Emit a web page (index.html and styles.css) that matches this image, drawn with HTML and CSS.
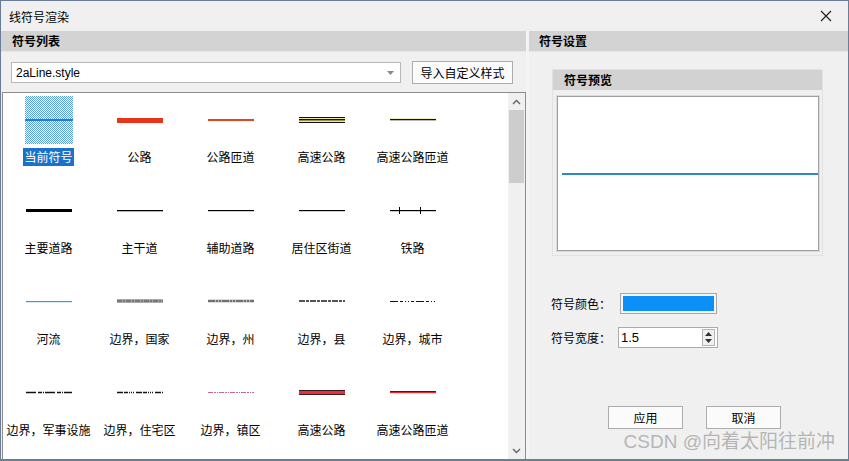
FILE: index.html
```html
<!DOCTYPE html>
<html lang="zh">
<head>
  <meta charset="UTF-8" />
  <title>线符号渲染</title>
  <link rel="stylesheet" href="styles.css">
</head>
<body>

<div class="window">
  <!-- 标题栏 -->
  <div class="titlebar">
    <span class="title">线符号渲染</span>
    <svg class="close" width="12" height="12" viewBox="0 0 12 12">
      <path d="M1 1 L11 11 M11 1 L1 11" stroke="#222" stroke-width="1.2" fill="none" />
    </svg>
  </div>

  <div class="main">
    <!-- 符号列表 -->
    <div class="left">
      <div class="pane-head">符号列表</div>
      <div class="toolbar">
        <div class="combo">
          <span>2aLine.style</span>
          <svg class="combo-arrow" width="7" height="4" viewBox="0 0 7 4"><path d="M0 0 L7 0 L3.5 4 Z" fill="#888" /></svg>
        </div>
        <button class="btn import">导入自定义样式</button>
      </div>

      <div class="listbox">
        <div class="grid">
          <div class="item selected">
            <div class="icon checker">
              <svg width="48" height="48"><rect x="0" y="23" width="48" height="2" fill="#1f7fd6" /></svg>
            </div>
            <span class="label">当前符号</span>
          </div>
          <div class="item">
            <div class="icon"><svg width="48" height="48"><rect x="1" y="22" width="46" height="5" fill="#e8341c" /></svg></div>
            <span class="label">公路</span>
          </div>
          <div class="item">
            <div class="icon"><svg width="48" height="48"><rect x="1" y="23" width="46" height="2" fill="#e0461e" /></svg></div>
            <span class="label">公路匝道</span>
          </div>
          <div class="item">
            <div class="icon"><svg width="48" height="48">
              <rect x="1" y="21" width="46" height="6" fill="#f2e98a" />
              <rect x="1" y="21" width="46" height="1" fill="#111" />
              <rect x="1" y="23" width="46" height="1.4" fill="#111" />
              <rect x="1" y="26" width="46" height="1" fill="#111" />
            </svg></div>
            <span class="label">高速公路</span>
          </div>
          <div class="item">
            <div class="icon"><svg width="48" height="48">
              <rect x="1" y="22" width="46" height="1" fill="#f4f0c0" />
              <rect x="1" y="23" width="46" height="1.3" fill="#111" />
            </svg></div>
            <span class="label">高速公路匝道</span>
          </div>

          <div class="item">
            <div class="icon"><svg width="48" height="48"><rect x="1" y="22" width="46" height="3" fill="#000" /></svg></div>
            <span class="label">主要道路</span>
          </div>
          <div class="item">
            <div class="icon"><svg width="48" height="48"><rect x="1" y="23" width="46" height="1.3" fill="#000" /></svg></div>
            <span class="label">主干道</span>
          </div>
          <div class="item">
            <div class="icon"><svg width="48" height="48"><rect x="1" y="23" width="46" height="1.2" fill="#000" /></svg></div>
            <span class="label">辅助道路</span>
          </div>
          <div class="item">
            <div class="icon"><svg width="48" height="48"><rect x="1" y="23" width="46" height="1.2" fill="#000" /></svg></div>
            <span class="label">居住区街道</span>
          </div>
          <div class="item">
            <div class="icon"><svg width="48" height="48">
              <rect x="1" y="23" width="46" height="1.2" fill="#000" />
              <rect x="10" y="20" width="1" height="7" fill="#000" />
              <rect x="31" y="20" width="1" height="7" fill="#000" />
            </svg></div>
            <span class="label">铁路</span>
          </div>

          <div class="item">
            <div class="icon"><svg width="48" height="48"><rect x="1" y="23" width="46" height="1.2" fill="#3d9ad0" /></svg></div>
            <span class="label">河流</span>
          </div>
          <div class="item">
            <div class="icon"><svg width="48" height="48">
              <rect x="1" y="21" width="46" height="4" fill="#aaa" />
              <line x1="1" y1="23" x2="47" y2="23" stroke="#444" stroke-width="1" stroke-dasharray="5 1 2 1" />
            </svg></div>
            <span class="label">边界，国家</span>
          </div>
          <div class="item">
            <div class="icon"><svg width="48" height="48">
              <rect x="1" y="21.5" width="46" height="3" fill="#bbb" />
              <line x1="1" y1="23" x2="47" y2="23" stroke="#222" stroke-width="1" stroke-dasharray="7 1 2 1 2 1" />
            </svg></div>
            <span class="label">边界，州</span>
          </div>
          <div class="item">
            <div class="icon"><svg width="48" height="48">
              <line x1="1" y1="23" x2="47" y2="23" stroke="#555" stroke-width="2" stroke-dasharray="6 1 3 1" />
            </svg></div>
            <span class="label">边界，县</span>
          </div>
          <div class="item">
            <div class="icon"><svg width="48" height="48">
              <line x1="1" y1="23.5" x2="47" y2="23.5" stroke="#111" stroke-width="1" stroke-dasharray="8 2 3 2 1 2 1 2 3 2" />
            </svg></div>
            <span class="label">边界，城市</span>
          </div>

          <div class="item">
            <div class="icon"><svg width="48" height="48">
              <line x1="1" y1="23.5" x2="47" y2="23.5" stroke="#111" stroke-width="1.3" stroke-dasharray="10 2 4 1 1 1" />
            </svg></div>
            <span class="label">边界，军事设施</span>
          </div>
          <div class="item">
            <div class="icon"><svg width="48" height="48">
              <line x1="1" y1="23.5" x2="47" y2="23.5" stroke="#111" stroke-width="1.3" stroke-dasharray="6 1 4 1 1 1 1 1 1 2" />
            </svg></div>
            <span class="label">边界，住宅区</span>
          </div>
          <div class="item">
            <div class="icon"><svg width="48" height="48">
              <line x1="1" y1="23.5" x2="47" y2="23.5" stroke="#c86a8c" stroke-width="1" stroke-dasharray="5 1 2 1 1 1" />
            </svg></div>
            <span class="label">边界，镇区</span>
          </div>
          <div class="item">
            <div class="icon"><svg width="48" height="48">
              <rect x="1" y="21" width="46" height="5" fill="#3a1a1a" />
              <rect x="1" y="22" width="46" height="3" fill="#e8303c" />
            </svg></div>
            <span class="label">高速公路</span>
          </div>
          <div class="item">
            <div class="icon"><svg width="48" height="48">
              <rect x="1" y="22" width="46" height="1" fill="#5a1414" />
              <rect x="1" y="23" width="46" height="1.2" fill="#e02830" />
            </svg></div>
            <span class="label">高速公路匝道</span>
          </div>
        </div>

        <div class="vscroll">
          <div class="sbtn">
            <svg width="9" height="6" viewBox="0 0 9 6"><path d="M1 5 L4.5 1.5 L8 5" stroke="#606060" stroke-width="1.3" fill="none" /></svg>
          </div>
          <div class="track"><div class="thumb"></div></div>
          <div class="sbtn">
            <svg width="9" height="6" viewBox="0 0 9 6"><path d="M1 1 L4.5 4.5 L8 1" stroke="#606060" stroke-width="1.3" fill="none" /></svg>
          </div>
        </div>
      </div>
    </div>

    <div class="splitter"></div>

    <!-- 符号设置 -->
    <div class="right">
      <div class="pane-head">符号设置</div>
      <div class="settings">
        <div class="group">
          <div class="group-head">符号预览</div>
          <div class="preview">
            <div class="preview-line"></div>
          </div>
        </div>

        <div class="form-row first">
          <span class="form-label">符号颜色：</span>
          <div class="swatch"><div class="swatch-fill"></div></div>
        </div>
        <div class="form-row">
          <span class="form-label">符号宽度：</span>
          <div class="spin">
            <span>1.5</span>
            <div class="spin-btns">
              <svg width="7" height="4" viewBox="0 0 7 4"><path d="M0 4 L3.5 0 L7 4 Z" fill="#333" /></svg>
              <svg width="7" height="4" viewBox="0 0 7 4"><path d="M0 0 L7 0 L3.5 4 Z" fill="#333" /></svg>
            </div>
          </div>
        </div>

        <div class="actions">
          <button class="btn action">应用</button>
          <button class="btn action">取消</button>
        </div>
      </div>
    </div>
  </div>

  <div class="watermark">CSDN @向着太阳往前冲</div>
</div>

</body>
</html>
```

FILE: styles.css
```css
body {
  margin: 0;
  background: #f0f0f0;
  font-family: "Noto Sans CJK SC", "Liberation Sans", sans-serif;
  font-size: 12px;
  color: #000;
}

.window {
  position: relative;
  width: 849px;
  height: 461px;
  box-sizing: border-box;
  border: 1px solid #6b7c98;
  border-bottom-width: 2px;
  background: #f0f0f0;
  overflow: hidden;
  display: flex;
  flex-direction: column;
}

.titlebar {
  height: 30px;
  display: flex;
  align-items: center;
  justify-content: space-between;
  padding: 0 16px 0 8px;
  flex-shrink: 0;
}

.title {
  font-size: 12px;
}

.main {
  flex: 1;
  display: flex;
  min-height: 0;
}

.left {
  width: 525px;
  display: flex;
  flex-direction: column;
}

.splitter {
  width: 3px;
  background: #f4f4f4;
}

.right {
  flex: 1;
  display: flex;
  flex-direction: column;
}

.pane-head {
  height: 20px;
  line-height: 20px;
  background: #d3d3d3;
  font-weight: bold;
  padding-left: 11px;
  border-bottom: 1px solid #e6e6e6;
}

.right .pane-head {
  padding-left: 10px;
}

.toolbar {
  height: 40px;
  display: flex;
  align-items: center;
  padding-left: 10px;
  gap: 11px;
  box-sizing: border-box;
  padding-top: 1px;
}

.combo {
  width: 390px;
  height: 21px;
  box-sizing: border-box;
  border: 1px solid #b8b8b8;
  background: #fff;
  display: flex;
  align-items: center;
  justify-content: space-between;
  padding: 0 6px 0 4px;
  font-family: "Liberation Sans", "Noto Sans CJK SC", sans-serif;
  font-size: 12px;
}

.btn {
  font-family: "Noto Sans CJK SC", "Liberation Sans", sans-serif;
  font-size: 12px;
  background: #fbfbfb;
  border: 1px solid #adadad;
  color: #000;
  padding: 0;
  cursor: pointer;
}

.import {
  width: 101px;
  height: 23px;
}

.listbox {
  flex: 1;
  margin-left: 1px;
  border: 1px solid #8c8c8c;
  border-bottom: none;
  background: #fff;
  display: flex;
  min-height: 0;
  overflow: hidden;
}

.grid {
  flex: 1;
  display: grid;
  grid-template-columns: repeat(5, 91px);
  grid-auto-rows: 91px;
  align-content: start;
}

.item {
  display: flex;
  flex-direction: column;
  align-items: center;
  padding-top: 3px;
}

.icon {
  width: 48px;
  height: 48px;
}

.icon svg {
  display: block;
}

.checker {
  background: repeating-conic-gradient(#5a9fdf 0 25%, #ffffff 0 50%) 0 0 / 2px 2px;
}

.label {
  margin-top: 4px;
  height: 18px;
  line-height: 18px;
  padding: 0 1px;
  white-space: nowrap;
}

.selected .label {
  background: #1a73cb;
  color: #fff;
}

.vscroll {
  width: 17px;
  display: flex;
  flex-direction: column;
  background: #f0f0f0;
}

.sbtn {
  height: 17px;
  display: flex;
  align-items: center;
  justify-content: center;
  flex-shrink: 0;
}

.track {
  flex: 1;
  padding: 0 1px;
}

.thumb {
  height: 73px;
  background: #cdcdcd;
}

.settings {
  padding: 17px 0 0 22px;
  display: flex;
  flex-direction: column;
}

.group {
  width: 271px;
  height: 187px;
  margin-left: 1px;
  box-sizing: border-box;
  border: 1px solid #e2e2e2;
  display: flex;
  flex-direction: column;
}

.group-head {
  height: 20px;
  line-height: 20px;
  background: #d2d2d2;
  font-weight: bold;
  padding-left: 11px;
  flex-shrink: 0;
}

.preview {
  margin: 6px 3px 4px 4px;
  flex: 1;
  background: #fff;
  border: 1px solid #a0a0a0;
  box-shadow: 0 0 0 1px #dadada;
  display: flex;
  align-items: center;
  padding-left: 4px;
}

.preview-line {
  flex: 1;
  height: 2px;
  background: #2f87c9;
}

.form-row {
  display: flex;
  align-items: center;
  height: 21px;
  margin-top: 13px;
}

.form-row.first {
  margin-top: 37px;
}

.form-label {
  width: 67px;
}

.swatch {
  width: 97px;
  height: 21px;
  box-sizing: border-box;
  margin-left: 2px;
  border: 1px solid #a8a8a8;
  padding: 2px;
  background: #f5f5f5;
}

.swatch-fill {
  height: 100%;
  background: #0c8ff7;
}

.spin {
  width: 100px;
  height: 21px;
  box-sizing: border-box;
  border: 1px solid #ababab;
  background: #fff;
  display: flex;
  align-items: center;
  justify-content: space-between;
  padding: 0 2px;
  font-family: "Liberation Sans", sans-serif;
  font-size: 13px;
}

.spin-btns {
  width: 13px;
  height: 17px;
  border: 1px solid #b5b5b5;
  box-sizing: border-box;
  background: #f0f0f0;
  display: flex;
  flex-direction: column;
  align-items: center;
  justify-content: space-around;
  padding: 1px 0;
}

.spin-btns svg {
  display: block;
}

.actions {
  display: flex;
  gap: 23px;
  margin: 58px 0 0 57px;
}

.action {
  width: 75px;
  height: 23px;
}

.watermark {
  position: absolute;
  right: 13px;
  bottom: 6px;
  font-size: 19px;
  color: rgba(120, 120, 120, 0.5);
  font-family: "Liberation Sans", "Noto Sans CJK SC", sans-serif;
  white-space: nowrap;
  pointer-events: none;
}
```
